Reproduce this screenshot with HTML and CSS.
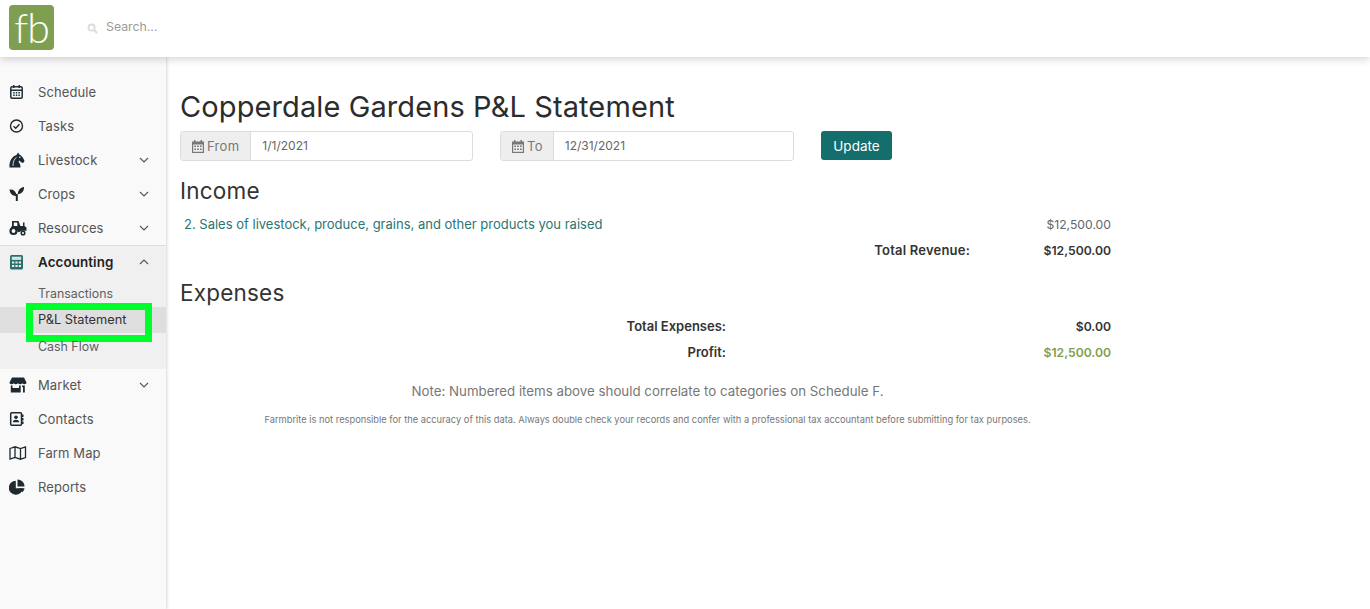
FILE: index.html
```html
<!DOCTYPE html>
<html lang="en">
<head>
    <meta charset="UTF-8">
    <meta name="viewport" content="width=device-width, initial-scale=1.0">
    <title>P&amp;L Statement</title>
    <link rel="stylesheet" href="styles.css">
</head>
<body>

<header class="header">
    <div class="logo"><span class="logo-text">fb</span></div>
    <div class="search">
        <svg class="search-icon" viewBox="0 0 12 12"><circle cx="5" cy="5" r="3.4" fill="none" stroke="#dcdcdc" stroke-width="2"/><path d="M7.6 7.6L11 11" stroke="#dcdcdc" stroke-width="2.2"/></svg>
        <span class="search-text">Search...</span>
    </div>
</header>

<div class="layout">
    <nav class="sidebar">
        <a class="nav-item">
            <svg class="nav-icon" viewBox="0 0 16 16"><rect x="1.800" y="2.700" width="11.400" height="11.600" rx="1.200" fill="none" stroke="#1f3038" stroke-width="1.500"/><path d="M4 1h1.500v3H4zM9.500 1H11v3H9.500zM2 5.500h11V7H2z" fill="#1f3038"/><path d="M4.200 8h1.500v1.400H4.200zM6.800 8h1.500v1.400H6.800zM9.400 8h1.500v1.400H9.400zM4.200 10.500h1.500v1.400H4.200zM6.800 10.500h1.500v1.400H6.800zM9.400 10.500h1.500v1.400H9.400z" fill="#1f3038"/></svg>
            <span class="nav-label">Schedule</span>
        </a>
        <a class="nav-item">
            <svg class="nav-icon" viewBox="0 0 16 16"><circle cx="7.500" cy="8" r="6" fill="none" stroke="#1f2a30" stroke-width="1.400"/><path d="M4.600 8.200l2.100 2.100 3.800-4.100" fill="none" stroke="#1f2a30" stroke-width="1.400"/></svg>
            <span class="nav-label">Tasks</span>
        </a>
        <a class="nav-item">
            <svg class="nav-icon" viewBox="0 0 16 16"><path d="M.5 15.500C0 10 2.500 4.500 7.500 3L9 .5l1.500 2c2.500 1.200 4 3.700 5 6.500l-1.300 2-2.200-.7-1.500-1.800-1 1.300c1.500 1.500 2 3.500 2 5.700z" fill="#1f2a30"/><circle cx="10.800" cy="5.300" r=".8" fill="#f9f9f9"/><path d="M4 14c0-4 1-7 3.500-8.500" fill="none" stroke="#f9f9f9" stroke-width=".8"/></svg>
            <span class="nav-label">Livestock</span>
            <svg class="chevron" viewBox="0 0 10 6"><path d="M1 1l4 4 4-4" fill="none" stroke="#555" stroke-width="1.100"/></svg>
        </a>
        <a class="nav-item">
            <svg class="nav-icon" viewBox="0 0 16 16"><path d="M.5 3.500c3.800-.4 6.500 1.500 7 5.500v1C3.800 10 1 8 .5 3.500zM15 1c.2 4.200-2 6.800-6.200 7.200C9 4 11.200 1.500 15 1z" fill="#1f2a30"/><rect x="6.800" y="8" width="2" height="7" fill="#1f2a30"/></svg>
            <span class="nav-label">Crops</span>
            <svg class="chevron" viewBox="0 0 10 6"><path d="M1 1l4 4 4-4" fill="none" stroke="#555" stroke-width="1.100"/></svg>
        </a>
        <a class="nav-item">
            <svg class="nav-icon nav-icon-wide" viewBox="0 0 18 16"><path d="M3 1h6.500l1.800 5H14V2.500h1.500V6l2 1.500v3.200h-5L10.500 12H8.800C8.300 9 5.500 7.200 2 8.200V6.500h1z" fill="#1f2a30"/><circle cx="4.500" cy="11" r="3" fill="none" stroke="#1f2a30" stroke-width="2.200"/><circle cx="14" cy="13" r="1.800" fill="none" stroke="#1f2a30" stroke-width="1.500"/><rect x="4.800" y="2.500" width="3.500" height="3.500" fill="#f9f9f9"/></svg>
            <span class="nav-label">Resources</span>
            <svg class="chevron" viewBox="0 0 10 6"><path d="M1 1l4 4 4-4" fill="none" stroke="#555" stroke-width="1.100"/></svg>
        </a>

        <div class="nav-group">
            <a class="nav-item nav-item-open">
                <svg class="nav-icon" viewBox="0 0 16 16"><rect x="1" y="1" width="13" height="14.500" rx="1.500" fill="#2a6f6e"/><rect x="2.800" y="2.700" width="9.400" height="3.200" fill="#d5e3e2"/><path d="M3 7.500h2.200v2H3zM6.400 7.500h2.200v2H6.400zM9.800 7.500H12v2H9.800zM3 11h2.200v2H3zM6.400 11h2.200v2H6.400zM9.800 11H12v2H9.800z" fill="#e6eeee"/></svg>
                <span class="nav-label">Accounting</span>
                <svg class="chevron" viewBox="0 0 10 6"><path d="M1 5l4-4 4 4" fill="none" stroke="#555" stroke-width="1.100"/></svg>
            </a>
            <a class="sub-item sub-item-first">Transactions</a>
            <a class="sub-item sub-item-active">P&amp;L Statement<span class="highlight"></span></a>
            <a class="sub-item">Cash Flow</a>
        </div>

        <a class="nav-item">
            <svg class="nav-icon nav-icon-wide" viewBox="0 0 18 16"><path d="M3 .5h12l2.500 5c0 2-3 2.200-4.200.8-1 1.400-3.200 1.400-4.300 0-1.100 1.400-3.300 1.400-4.300 0C3.500 7.700.5 7.500.5 5.500z" fill="#1f2a30"/><path d="M1.800 8.500h1.700V11H10V8.500h1.700v7H1.800zM13 8.500h2.800v7H14V10h-1z" fill="#1f2a30"/></svg>
            <span class="nav-label">Market</span>
            <svg class="chevron" viewBox="0 0 10 6"><path d="M1 1l4 4 4-4" fill="none" stroke="#555" stroke-width="1.100"/></svg>
        </a>
        <a class="nav-item">
            <svg class="nav-icon" viewBox="0 0 16 16"><rect x="1.700" y="1.700" width="10.800" height="12.600" rx="1" fill="none" stroke="#1f2a30" stroke-width="1.500"/><circle cx="7" cy="6.200" r="1.800" fill="#1f2a30"/><path d="M3.800 11.300c0-3.300 6.400-3.300 6.400 0z" fill="#1f2a30"/><path d="M13 3.500h1.500v2.500H13zM13 7h1.500v2.500H13zM13 10.500h1.500V13H13z" fill="#1f2a30"/></svg>
            <span class="nav-label">Contacts</span>
        </a>
        <a class="nav-item">
            <svg class="nav-icon nav-icon-wide" viewBox="0 0 18 16"><path d="M1 3.500L6 1.800l5.500 1.700L16.500 1.800v10.700L11.500 14.200 6 12.500 1 14.200zM6 1.800v10.700M11.500 3.500v10.700" fill="none" stroke="#1f2a30" stroke-width="1.300"/></svg>
            <span class="nav-label">Farm Map</span>
        </a>
        <a class="nav-item">
            <svg class="nav-icon" viewBox="0 0 16 16"><path d="M6.800 1.800a7 7 0 1 0 7 7.500H6.800z" fill="#1f2a30"/><path d="M8.500.5a7 7 0 0 1 7 7h-7z" fill="#1f2a30"/><path d="M9.500 9.200h6a7 7 0 0 1-1.900 4.100z" fill="#1f2a30"/></svg>
            <span class="nav-label">Reports</span>
        </a>
    </nav>

    <main class="content">
        <h1 class="page-title">Copperdale Gardens P&amp;L Statement</h1>

        <form class="date-form">
            <div class="date-group">
                <span class="date-addon">
                    <svg class="cal-icon" viewBox="0 0 12 13"><path d="M2 0h1.500v1.500h5V0H10v1.500h2V13H0V1.500h2z" fill="#777"/><rect x="1.200" y="4.500" width="9.600" height="7.300" fill="#eee"/><path d="M2.300 5.500h1.700v1.500H2.300zM5.100 5.500h1.700v1.500H5.100zM8 5.500h1.700v1.500H8zM2.300 8.500h1.700V10H2.300zM5.100 8.500h1.700V10H5.100zM8 8.500h1.700V10H8z" fill="#777"/></svg>
                    From
                </span>
                <span class="date-value">1/1/2021</span>
            </div>
            <div class="date-group date-group-to">
                <span class="date-addon date-addon-to">
                    <svg class="cal-icon" viewBox="0 0 12 13"><path d="M2 0h1.500v1.500h5V0H10v1.500h2V13H0V1.500h2z" fill="#777"/><rect x="1.200" y="4.500" width="9.600" height="7.300" fill="#eee"/><path d="M2.300 5.500h1.700v1.500H2.300zM5.100 5.500h1.700v1.500H5.100zM8 5.500h1.700v1.500H8zM2.300 8.500h1.700V10H2.300zM5.100 8.500h1.700V10H5.100zM8 8.500h1.700V10H8z" fill="#777"/></svg>
                    To
                </span>
                <span class="date-value">12/31/2021</span>
            </div>
            <button type="button" class="btn-update">Update</button>
        </form>

        <h2 class="section-title">Income</h2>
        <div class="report">
            <div class="row row-item">
                <a class="row-link">2. Sales of livestock, produce, grains, and other products you raised</a>
                <span class="amount amount-plain">$12,500.00</span>
            </div>
            <div class="row row-total">
                <span class="total-label">Total Revenue:</span>
                <span class="amount">$12,500.00</span>
            </div>
        </div>

        <h2 class="section-title section-expenses">Expenses</h2>
        <div class="report">
            <div class="row row-total row-total-first row-wide">
                <span class="total-label">Total Expenses:</span>
                <span class="amount">$0.00</span>
            </div>
            <div class="row row-total row-wide">
                <span class="total-label">Profit:</span>
                <span class="amount amount-profit">$12,500.00</span>
            </div>
            <p class="note">Note: Numbered items above should correlate to categories on Schedule F.</p>
            <p class="disclaimer">Farmbrite is not responsible for the accuracy of this data. Always double check your records and confer with a professional tax accountant before submitting for tax purposes.</p>
        </div>
    </main>
</div>

</body>
</html>
```

FILE: styles.css
```css
* {
    box-sizing: border-box;
}

html, body {
    height: 100%;
}

body {
    margin: 0;
    background-color: #fff;
    color: #2b2b2b;
    font: 13px Inter, "Open Sans", sans-serif;
    overflow: hidden;
}

.header {
    position: relative;
    z-index: 2;
    display: flex;
    align-items: flex-start;
    height: 57px;
    padding: 5px 0 0 9px;
    background-color: #fff;
    box-shadow: 0 2px 8px rgba(0, 0, 0, 0.18);
}

.logo {
    display: flex;
    align-items: center;
    justify-content: center;
    width: 45px;
    height: 45px;
    border-radius: 4px;
    background-color: #7f9f50;
}

.logo-text {
    color: #fff;
    font: 300 41px/45px Lato, sans-serif;
    letter-spacing: -1px;
}

.search {
    display: flex;
    align-items: center;
    height: 43px;
    margin-left: 33px;
    gap: 8px;
}

.search-icon {
    width: 11px;
    height: 11px;
    margin-top: 3px;
}

.search-text {
    color: #9a9a9a;
    font-size: 12.300px;
}

.layout {
    display: flex;
    height: 552px;
}

.sidebar {
    flex: 0 0 166px;
    padding-top: 18px;
    background-color: #f9f9f9;
    box-shadow: 1px 0 3px rgba(0, 0, 0, 0.16);
}

.nav-item {
    display: flex;
    align-items: center;
    height: 34px;
    padding-left: 9px;
    color: #555;
    font-size: 13px;
    letter-spacing: 0.1px;
}

.nav-icon {
    flex: none;
    width: 16px;
    height: 16px;
}

.nav-icon-wide {
    width: 18px;
    margin-right: -2px;
}

.nav-label {
    margin-left: 13px;
    flex: 1;
}

.chevron {
    width: 10px;
    height: 6px;
    margin-right: 17px;
}

.nav-group {
    height: 124px;
    margin-bottom: -1px;
    background-color: #f0f0f0;
    border-top: 1px solid #dedede;
}

.nav-item-open {
    margin-top: -1px;
    font-size: 13.400px;
    font-weight: 600;
    color: #222;
}

.sub-item {
    position: relative;
    display: flex;
    align-items: center;
    height: 26.500px;
    padding-left: 38px;
    color: #5f5f5f;
    font-size: 12.400px;
}

.sub-item-first {
    margin-top: 1px;
}

.sub-item-active {
    background-color: #dedede;
    color: #333;
    font-size: 12.800px;
}

.highlight {
    position: absolute;
    left: 26px;
    top: -4px;
    width: 126px;
    height: 39px;
    border: 7px solid #00ff2a;
}

.content {
    flex: 1;
    padding: 33px 0 0 14px;
}

.page-title {
    margin: 0;
    color: #2c2c2c;
    font-size: 29px;
    font-weight: 400;
    line-height: 34px;
    letter-spacing: 0.1px;
}

.date-form {
    display: flex;
    align-items: flex-start;
    width: 712px;
    margin-top: 7px;
}

.date-group {
    display: flex;
    width: 293px;
    height: 30px;
    border: 1px solid #ddd;
    border-radius: 3px;
    font-size: 12.500px;
}

.date-group-to {
    width: 294px;
    margin-left: 27px;
}

.date-addon {
    display: flex;
    align-items: center;
    gap: 3px;
    padding: 0 11px 0 11px;
    background-color: #eee;
    border-right: 1px solid #ddd;
    color: #777;
    font-size: 13px;
    letter-spacing: 0.3px;
}

.date-addon-to {
    padding-right: 10px;
}

.cal-icon {
    width: 12px;
    height: 13px;
}

.date-value {
    padding-left: 11px;
    line-height: 28px;
    color: #666;
    font-size: 12px;
}

.btn-update {
    flex: none;
    width: 71px;
    height: 29px;
    margin-left: 27px;
    border: 0;
    border-radius: 3px;
    background-color: #136e6c;
    color: #fff;
    font: 13.500px Inter, sans-serif;
}

.section-title {
    margin: 17px 0 0;
    color: #333;
    font-size: 22.500px;
    font-weight: 400;
    line-height: 26px;
    letter-spacing: 0.2px;
}

.section-expenses {
    margin-top: 17px;
}

.report {
    width: 931px;
}

.row {
    display: flex;
    align-items: center;
    height: 26px;
}

.row-item {
    margin-top: 7px;
    justify-content: space-between;
    padding-left: 4px;
}

.row-link {
    color: #2b7573;
}

.row-total {
    justify-content: flex-end;
    font-weight: 600;
    color: #333;
    font-size: 13px;
}

.row-total-first {
    margin-top: 7px;
}

.total-label {
    margin-right: 40px;
    letter-spacing: 0.2px;
}

.row-wide .total-label {
    margin-right: 284px;
    letter-spacing: 0;
}

.amount {
    width: 101px;
    text-align: right;
    font-size: 12.200px;
    letter-spacing: 0;
}

.amount-plain {
    color: #666;
}

.amount-profit {
    color: #7f9f50;
}

.note {
    margin: 13px 0 0;
    padding-left: 4px;
    color: #777;
    font-size: 13.300px;
    text-align: center;
    line-height: 26px;
}

.disclaimer {
    margin: 10px 0 0;
    padding-left: 4px;
    color: #777;
    font-size: 9.300px;
    text-align: center;
}
```
